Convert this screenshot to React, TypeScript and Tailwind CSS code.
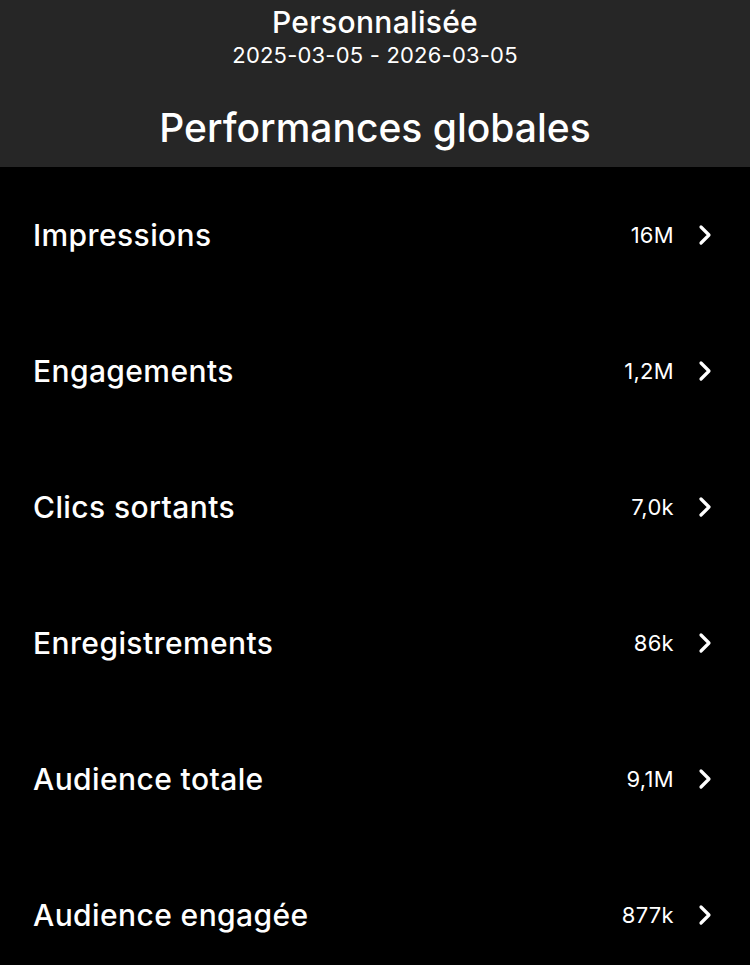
const rows = [
  { label: "Impressions", value: "16M" },
  { label: "Engagements", value: "1,2M" },
  { label: "Clics sortants", value: "7,0k" },
  { label: "Enregistrements", value: "86k" },
  { label: "Audience totale", value: "9,1M" },
  { label: "Audience engagée", value: "877k" },
];

function Chevron() {
  return (
    <svg width="16" height="22" viewBox="0 0 16 22" fill="none">
      <polyline
        points="4,3 12,11 4,19"
        stroke="white"
        strokeWidth="3.2"
        strokeLinecap="round"
        strokeLinejoin="round"
      />
    </svg>
  );
}

export default function App() {
  return (
    <div
      className="min-h-[965px] w-[750px] bg-black text-white"
      style={{ fontFamily: "Inter, 'Noto Sans', sans-serif" }}
    >
      <header className="flex h-[167px] flex-col items-center bg-[#262626]">
        <div className="mt-[3px] text-[30px] leading-[38px] font-medium tracking-[0.3px]">Personnalisée</div>
        <div className="text-[22px] leading-[28px] tracking-[0.2px]">2025-03-05 - 2026-03-05</div>
        <h1 className="mt-[35px] text-[39px] leading-[48px] font-medium">Performances globales</h1>
      </header>

      <ul>
        {rows.map((r) => (
          <li key={r.label} className="flex h-[136px] items-center pl-[33px] pr-[37px]">
            <span className="flex-1 text-[30px] font-medium tracking-[0.4px]">{r.label}</span>
            <span className="mr-[23px] text-[22px] tracking-[0.3px]">{r.value}</span>
            <Chevron />
          </li>
        ))}
      </ul>
    </div>
  );
}
